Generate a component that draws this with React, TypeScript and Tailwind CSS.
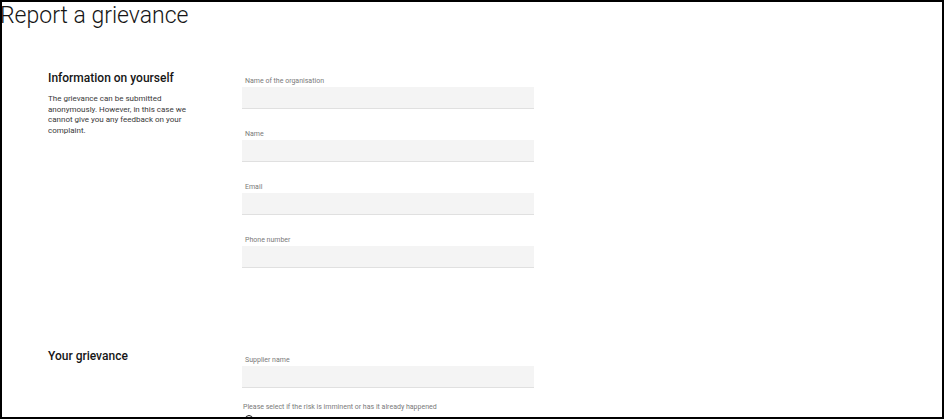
import React from 'react';

const font = { fontFamily: 'Roboto, "Noto Sans", sans-serif' };

const Field: React.FC<{ label: string }> = ({ label }) => (
    <div className="mb-[21px]">
        <label className="block text-[7px] leading-[9px] text-[#7a7a7a] pl-[3px] mb-[1px]">{label}</label>
        <div className="h-[22px] bg-[#f4f4f4] border-b border-[#e0e0e0]" />
    </div>
);

const App: React.FC = () => {
    return (
        <div className="w-[945px] h-[420px] bg-white overflow-hidden" style={font}>
            <div className="w-[944px] h-[419px] border-2 border-black overflow-hidden relative">
                <h1 className="text-[23px] leading-[30px] font-light text-[#161616] -ml-[2px] -mt-[1px]">Report a grievance</h1>

                <div className="grid grid-cols-[194px_292px] pl-[46px] mt-[39px]">
                    <div>
                        <h2 className="text-[12px] leading-[16px] font-medium text-[#161616]">Information on yourself</h2>
                        <p className="text-[8px] leading-[10.7px] text-[#393939] mt-[8px]">
                            The grievance can be submitted<br />
                            anonymously. However, in this case we<br />
                            cannot give you any feedback on your<br />
                            complaint.
                        </p>
                    </div>
                    <div className="pt-[7px]">
                        <Field label="Name of the organisation" />
                        <Field label="Name" />
                        <Field label="Email" />
                        <Field label="Phone number" />
                    </div>
                </div>

                <div className="grid grid-cols-[194px_292px] pl-[46px] mt-[61px]">
                    <div>
                        <h2 className="text-[12px] leading-[16px] font-medium text-[#161616] -mt-[2px]">Your grievance</h2>
                    </div>
                    <div className="pt-[6px]">
                        <Field label="Supplier name" />
                        <div className="text-[7px] leading-[9px] text-[#7a7a7a] pl-[1px] -mt-[6px]">Please select if the risk is imminent or has it already happened</div>
                        <div className="mt-[3px] ml-[3px] w-[8px] h-[8px] rounded-full border border-[#161616]" />
                    </div>
                </div>
            </div>
        </div>
    );
};

export default App;
